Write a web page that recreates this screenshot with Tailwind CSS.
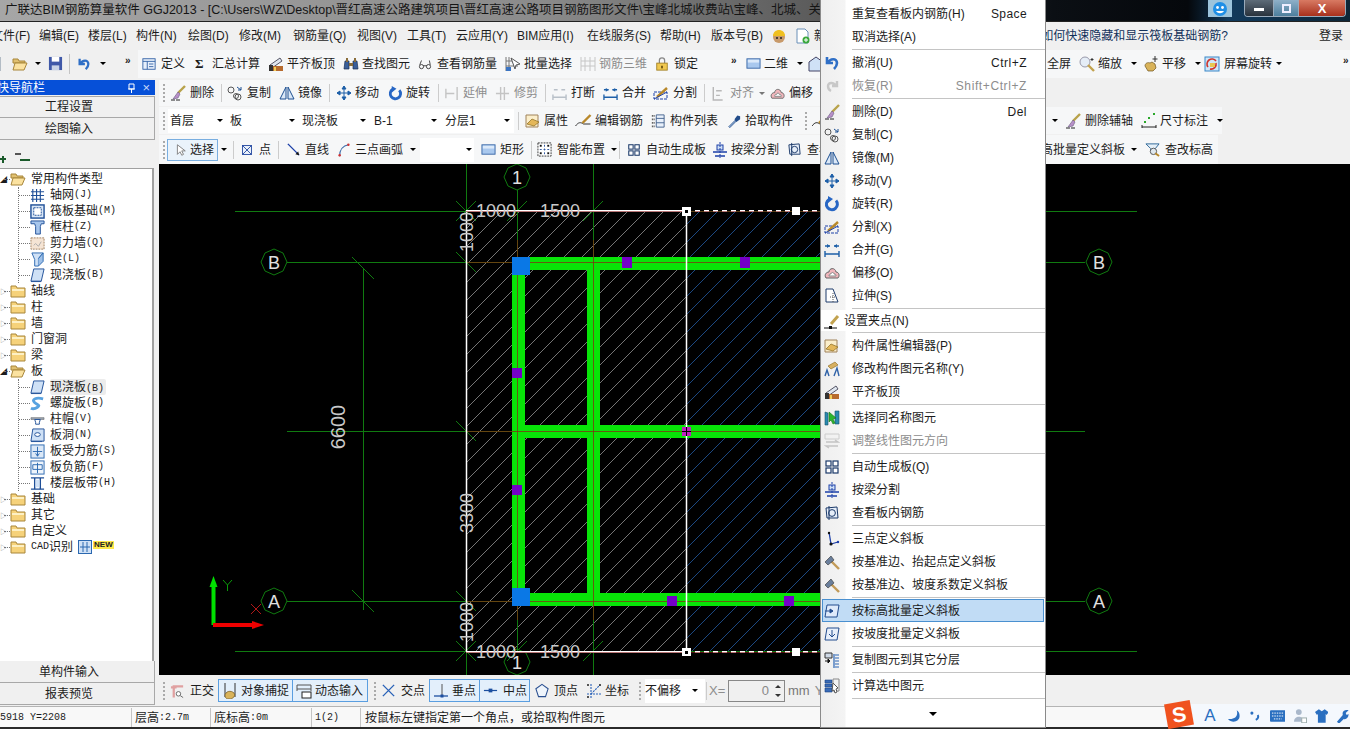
<!DOCTYPE html>
<html lang="zh-CN">
<head>
<meta charset="UTF-8">
<title>GGJ2013</title>
<script src="https://cdn.jsdelivr.net/npm/@tailwindcss/browser@4"></script>
</head>
<body class="bg-[#2a2a2a]">
<!-- shared icon sheet: the toolbars and the context menu use the same icons -->
<svg class="hidden">
  <symbol id="undo" viewBox="0 0 16 16"><path d="M3 2v6h6M4 8c2-5 9-5 9 0 0 2-1 4-3 6" fill="none" stroke="#2f6fc6" stroke-width="2.6"/></symbol>
  <symbol id="redo" viewBox="0 0 16 16"><path d="M13 3v5H8M12 8C10 4 4 4 4 8c0 2 1 4 3 5" fill="none" stroke="#c8c8c8" stroke-width="2.4"/></symbol>
  <symbol id="brush" viewBox="0 0 16 16"><path d="M1 15h9" stroke="#222" stroke-dasharray="4 1"/><path d="M15 1L8 8" stroke="#b8a24a" stroke-width="2.4"/><path d="M8 7l2 2-2 4-5 1z" fill="#b890c8" stroke="#6a5a80" stroke-width=".6"/></symbol>
  <symbol id="copy" viewBox="0 0 16 16"><g fill="none" stroke="#555"><circle cx="4" cy="5" r="3"/><circle cx="11" cy="12" r="3"/><circle cx="9" cy="11" r="2.5"/></g><path d="M10 2l4 3m0-3v3h-3" fill="none" stroke="#1d4f91"/></symbol>
  <symbol id="mirror" viewBox="0 0 16 16"><path d="M7 2v12H1zM9 2v12h6z" fill="#dbe8f7" stroke="#1d4f91"/></symbol>
  <symbol id="move" viewBox="0 0 16 16"><path d="M8 1v14M1 8h14M8 1L6 4h4zM8 15l-2-3h4zM1 8l3-2v4zM15 8l-3-2v4z" fill="#1d5fa8" stroke="#1d5fa8"/></symbol>
  <symbol id="rotate" viewBox="0 0 16 16"><path d="M12 4.5A5.5 5.5 0 1 1 5 3.5" fill="none" stroke="#2766c4" stroke-width="3"/><path d="M4 0l5 3-5 4z" fill="#2766c4"/></symbol>
  <symbol id="split" viewBox="0 0 16 16"><rect x="1" y="7" width="13" height="7" fill="none" stroke="#1c40a8" stroke-dasharray="3 1"/><path d="M4 12L14 3" stroke="#b8882a" stroke-width="2.4"/><path d="M1 14L14 7" stroke="#1c40a8"/></symbol>
  <symbol id="merge" viewBox="0 0 16 16"><path d="M1 4h5M15 4h-5M1 12h14M1 9v6M15 9v6" stroke="#1d5fa8" stroke-width="1.4"/><path d="M6 4L3 2v4zM10 4l3-2v4z" fill="#1d5fa8"/></symbol>
  <symbol id="offset" viewBox="0 0 16 16"><path d="M2 13c-2-3 0-6 3-6 0-4 6-5 7 0 3 0 4 4 2 6z" fill="#f1b6bc" stroke="#666"/><path d="M5 11c0-2 1-2 2-2 0-2 3-2 3 0 2 0 2 1 2 2z" fill="#fff" stroke="#888"/></symbol>
  <symbol id="stretch" viewBox="0 0 16 16"><path d="M2 1h7l5 13H2z" fill="#fff" stroke="#1c3a6a"/><path d="M9 5v9M6 9h6" stroke="#555" stroke-dasharray="1 1"/></symbol>
  <symbol id="pencil" viewBox="0 0 16 16"><path d="M0 15h5m3 0h5" stroke="#111"/><rect x="5" y="13" width="3" height="3" fill="#111"/><path d="M14 3L7 11" stroke="#c2a24e" stroke-width="3"/></symbol>
  <symbol id="props" viewBox="0 0 16 16"><path d="M1 2h12v12H1z" fill="#fbeecb" stroke="#a0825a"/><path d="M2 11l5-5 7 3-5 4z" fill="#e4b75a" stroke="#8a6a20" stroke-width=".7"/></symbol>
  <symbol id="rename" viewBox="0 0 16 16"><path d="M4 5l7-4 3 3-7 4z" fill="#d8b060" stroke="#8a6a20" stroke-width=".6"/><path d="M1 15l2-6 2 6M10 15l3-8 2 8" fill="none" stroke="#2f62a8" stroke-width="1.4"/></symbol>
  <symbol id="level" viewBox="0 0 16 16"><path d="M2 9L12 2l2 3L4 12z" fill="#dfe6ef" stroke="#556"/><rect x="2" y="10" width="13" height="5" fill="#b76b2e"/><rect x="6" y="11" width="2" height="4" fill="#f0cf5a"/><rect x="1" y="9" width="4" height="6" fill="#333"/></symbol>
  <symbol id="same" viewBox="0 0 16 16"><path d="M1 2l3 1v12H1zM11 1h4v13h-4z" fill="#2a8ab0" stroke="#14506a" stroke-width=".6"/><path d="M5 2l7 6-3 1 2 4-2 1-2-4-2 2z" fill="#2cb62c" stroke="#14701a" stroke-width=".6"/></symbol>
  <symbol id="adjust" viewBox="0 0 16 16"><path d="M1 1h14v5H1z" fill="none" stroke="#ccc"/><path d="M2 9h12l-3-2M14 13H2l3 2" fill="none" stroke="#c4c4c4" stroke-width="1.3"/></symbol>
  <symbol id="auto" viewBox="0 0 16 16"><g fill="#fff" stroke="#1c3a6a" stroke-width="1.2"><rect x="2" y="2" width="5" height="5"/><rect x="9" y="2" width="5" height="5"/><rect x="2" y="9" width="5" height="5"/><rect x="9" y="9" width="5" height="5"/></g></symbol>
  <symbol id="beamcut" viewBox="0 0 16 16"><path d="M1 10h14M3 14h10" stroke="#1c40a8" stroke-width="1.6"/><rect x="5" y="3" width="6" height="5" fill="#cfe0f6" stroke="#1c40a8"/><path d="M8 0v16" stroke="#1c40a8" stroke-dasharray="2 1"/></symbol>
  <symbol id="viewbar" viewBox="0 0 16 16"><path d="M2 3l11-1 1 11H3z" fill="#e6eef9" stroke="#1c3a6a"/><circle cx="8" cy="8" r="3.4" fill="none" stroke="#1c3a6a"/><path d="M5 1v14" stroke="#1c3a6a"/></symbol>
  <symbol id="tri" viewBox="0 0 16 16"><path d="M5 1l2 12 7-2" fill="none" stroke="#1c3fa8" stroke-width="1.3"/><circle cx="5" cy="2" r="1.2" fill="#111"/><circle cx="7" cy="13" r="1.6" fill="#111"/><circle cx="14" cy="11" r="1.2" fill="#1c3fa8"/></symbol>
  <symbol id="hammer" viewBox="0 0 16 16"><path d="M7 7l8 8" stroke="#c29a58" stroke-width="2.4"/><path d="M1 8l6-6 3 4-6 5z" fill="#6a7f9c" stroke="#333" stroke-width=".6"/></symbol>
  <symbol id="slabe" viewBox="0 0 16 16"><path d="M3 2h12l-2 12H1z" fill="#dfeafa" stroke="#234c8e"/><path d="M1 8h8M9 8L6 6v4z" fill="#234c8e" stroke="#234c8e"/></symbol>
  <symbol id="slabs" viewBox="0 0 16 16"><path d="M3 2h12l-2 12H1z" fill="#e8f0fb" stroke="#234c8e"/><path d="M8 4v6M5 8l3 3 3-3" fill="none" stroke="#234c8e"/></symbol>
  <symbol id="floors" viewBox="0 0 16 16"><path d="M1 1h7v5H1z" fill="#cfd9e6" stroke="#333"/><path d="M1 9h5M6 9L4 7v4z" stroke="#111" fill="#111"/><path d="M11 3h4M11 6h4M11 9h4M11 12h4M11 15h4M10 2v14" stroke="#2a64b4" stroke-width="1.2"/></symbol>
  <symbol id="calc" viewBox="0 0 16 16"><path d="M1 2h7v3H1zM1 6h7v3H1zM1 10h7v4H1z" fill="#3a6cb8" stroke="#17407f" stroke-width=".6"/><path d="M9 1h6v12H9z" fill="none" stroke="#888"/><path d="M9 5l5 5-2 1 1 3-2 1-1-3-2 1z" fill="#fff" stroke="#555"/></symbol>
  <symbol id="define" viewBox="0 0 16 16"><rect x="1" y="2" width="14" height="12" fill="#e8f0fb" stroke="#2d5ea4"/><path d="M1 5h14M6 5v9M8 8h5M8 11h5" stroke="#2d5ea4"/></symbol>
  <symbol id="binoc" viewBox="0 0 16 16"><path d="M2 5h4v8H1zM10 5h4l1 8h-5z" fill="#3a5f9a" stroke="#1b2f55" stroke-width=".7"/><path d="M3 2h2v4H3zM11 2h2v4h-2zM6 7h4v3H6z" fill="#8a6d3a"/></symbol>
  <symbol id="glasses" viewBox="0 0 16 16"><circle cx="4" cy="11" r="2.4" fill="none" stroke="#333"/><circle cx="12" cy="11" r="2.4" fill="none" stroke="#333"/><path d="M6 10h4M2 9l2-5M14 9l-1-5" stroke="#333" fill="none"/></symbol>
  <symbol id="batch" viewBox="0 0 16 16"><path d="M1 1v14M4 1v14M1 5h9M1 10h12" stroke="#777"/><path d="M6 2l9 6-4 1-1 4z" fill="#fff" stroke="#555"/><rect x="1" y="11" width="5" height="4" fill="#3a74c4"/></symbol>
  <symbol id="rebar3d" viewBox="0 0 16 16"><path d="M1 1v14M5 1v14M10 1v14M15 1v14M1 5h14M1 10h14" stroke="#c6c6c6"/></symbol>
  <symbol id="lock" viewBox="0 0 16 16"><path d="M5 7V4a3 3 0 0 1 6 0v3" fill="none" stroke="#888" stroke-width="1.4"/><rect x="2" y="7" width="12" height="8" fill="#f0c850" stroke="#a07e20"/><rect x="7" y="10" width="2" height="3" fill="#6a5010"/></symbol>
  <symbol id="box2d" viewBox="0 0 16 16"><rect x="1" y="3" width="14" height="10" fill="#a9c8ee" stroke="#3a68a8"/><rect x="2" y="4" width="12" height="3" fill="#dbe9f9"/></symbol>
  <symbol id="zoom" viewBox="0 0 16 16"><circle cx="6" cy="6" r="5" fill="#e5edf7" stroke="#99a"/><path d="M9 9l6 6" stroke="#c2a24e" stroke-width="2.4"/><path d="M13 2v3M11.500 3.500h3" stroke="#333"/></symbol>
  <symbol id="hand" viewBox="0 0 16 16"><path d="M2 10c0-3 3-4 5-3l2-1 3 2 1 4-3 3H5z" fill="#d9b35a" stroke="#6e5520" stroke-width=".7"/><path d="M12 0v6M9.500 3h5" stroke="#333"/></symbol>
  <symbol id="rotscreen" viewBox="0 0 16 16"><rect x="1" y="1" width="14" height="14" fill="#cfe6f8" stroke="#3a88c8"/><path d="M4 11a5 5 0 0 1 8-6" fill="none" stroke="#d0342c" stroke-width="1.6"/><path d="M12 7a5 5 0 0 1-6 6" fill="none" stroke="#d0342c" stroke-width="1.6"/><rect x="6" y="7" width="5" height="4" fill="#e8c850"/></symbol>
  <symbol id="arrow" viewBox="0 0 16 16"><path d="M5 2v11l3-3 2 4 2-1-2-4h4z" fill="#fff" stroke="#777"/></symbol>
  <symbol id="point" viewBox="0 0 16 16"><rect x="2" y="2" width="12" height="12" fill="#e9f0fa" stroke="#2448a0" stroke-width="1.2"/><path d="M2 2l12 12M14 2L2 14" stroke="#2448a0" stroke-width="1.2"/></symbol>
  <symbol id="line" viewBox="0 0 16 16"><path d="M2 2l12 12" stroke="#1c3fa8" stroke-width="1.5"/><path d="M14 14l-4-1 3-3z" fill="#111"/></symbol>
  <symbol id="arc" viewBox="0 0 16 16"><path d="M3 15C3 8 7 3 13 2" fill="none" stroke="#3a6aa8" stroke-width="1.4"/><circle cx="3" cy="14" r="1.4" fill="#d03030"/><circle cx="13" cy="2" r="1.4" fill="#d03030"/></symbol>
  <symbol id="smart" viewBox="0 0 16 16"><rect x="1" y="1" width="14" height="14" fill="#fff" stroke="#333" stroke-dasharray="2 1"/><path d="M8 3v10M3 8h10" stroke="#2a54a0" stroke-dasharray="2 2"/><rect x="3" y="3" width="2" height="2" fill="#111"/><rect x="11" y="11" width="2" height="2" fill="#111"/><rect x="11" y="3" width="2" height="2" fill="#111"/><rect x="3" y="11" width="2" height="2" fill="#111"/></symbol>
  <symbol id="editbar" viewBox="0 0 16 16"><path d="M0 13c3-4 5-4 8-2h7" fill="none" stroke="#333"/><path d="M15 2L7 10" stroke="#b8882a" stroke-width="2.4"/></symbol>
  <symbol id="list" viewBox="0 0 16 16"><path d="M6 1h9v14H6zM6 5h9M6 10h9" fill="#e8f0fb" stroke="#3a5a88"/><path d="M1 2h3M1 6h3M1 10h3M1 14h3" stroke="#333" stroke-dasharray="1 1" stroke-width="2"/></symbol>
  <symbol id="pick" viewBox="0 0 16 16"><path d="M2 14l7-7 1 1-7 7z" fill="#bcd6f2" stroke="#224c8a"/><path d="M8 6l3-4 3 1 0 3-4 3z" fill="#224c8a"/></symbol>
  <symbol id="dim" viewBox="0 0 16 16"><path d="M1 12v3M15 12v3M1 14h14" stroke="#222"/><path d="M3 9h2M7 5h2M12 1h2" stroke="#2aa82a" stroke-width="2"/></symbol>
  <symbol id="elev" viewBox="0 0 16 16"><path d="M1 2h14l-4 5v2H6V7z" fill="#e6f0f8" stroke="#2a6496"/><circle cx="9" cy="10" r="3.400" fill="#dfe8f0" stroke="#555"/><path d="M11 12l4 3" stroke="#b8882a" stroke-width="2"/></symbol>
  <symbol id="ortho" viewBox="0 0 16 16"><path d="M4 15V3h10M1 4h6" fill="none" stroke="#e0a0a0" stroke-width="2.400"/><circle cx="9" cy="11" r="2.400" fill="#fff" stroke="#666"/><path d="M11 13l3 2" stroke="#666"/></symbol>
  <symbol id="snap" viewBox="0 0 16 16"><path d="M3 0v14M13 0v14" stroke="#333"/><path d="M3 13c0-5 6-6 9-3 2 3-1 6-5 6-2 0-4-1-4-3z" fill="#d9b35a" stroke="#6e5520" stroke-width=".7"/></symbol>
  <symbol id="dyn" viewBox="0 0 16 16"><path d="M1 2h14M1 6h14" stroke="#555"/><path d="M1 2v6M15 2v6" stroke="#555"/><rect x="6" y="9" width="9" height="6" fill="#fff" stroke="#222"/></symbol>
  <symbol id="cross" viewBox="0 0 16 16"><path d="M2 2l12 12M14 2L2 14" stroke="#2a62b8" stroke-width="1.500"/></symbol>
  <symbol id="perp" viewBox="0 0 16 16"><path d="M1 13h14" stroke="#1c4fa0" stroke-width="1.300"/><path d="M9 1v12" stroke="#555"/><rect x="7.500" y="11.500" width="3" height="3" fill="#1c4fa0"/></symbol>
  <symbol id="mid" viewBox="0 0 16 16"><path d="M1 8h14" stroke="#1c4fa0" stroke-width="1.300"/><rect x="6" y="6" width="4" height="4" fill="#1c4fa0"/></symbol>
  <symbol id="vertex" viewBox="0 0 16 16"><path d="M8 1l7 5-3 9H4L1 6z" fill="#eef4fb" stroke="#2a4f90" stroke-width="1.200"/></symbol>
  <symbol id="coord" viewBox="0 0 16 16"><path d="M5 1v14M1 11h14M5 11l9-9" stroke="#2a62b8" stroke-dasharray="2 1" stroke-width="1.100"/><circle cx="2" cy="2" r="1" fill="#222"/><circle cx="14" cy="2" r="1" fill="#222"/><circle cx="2" cy="14" r="1" fill="#222"/></symbol>
  <symbol id="folder" viewBox="0 0 16 16"><path d="M1 3h5l1 2h8v9H1z" fill="#f6d27a" stroke="#a8863a"/><path d="M2 6h12v2H2z" fill="#fdf0c4"/></symbol>
  <symbol id="folderopen" viewBox="0 0 16 16"><path d="M1 3h5l1 2h6v2H1z" fill="#e0c070" stroke="#a8863a"/><path d="M1 14l2-7h12l-3 7z" fill="#fbe2a0" stroke="#a8863a"/></symbol>
  <symbol id="tgrid" viewBox="0 0 16 16"><path d="M3 1v14M7 1v14M11 1v14M1 4h14M1 8h14M1 12h14" stroke="#1f4f98" stroke-width="1.200"/></symbol>
  <symbol id="traft" viewBox="0 0 16 16"><rect x="1" y="1" width="14" height="14" fill="#dbe8f7" stroke="#1f4f98" stroke-width="1.500"/><rect x="4" y="4" width="8" height="8" fill="#fff" stroke="#1f4f98" stroke-dasharray="2 1"/></symbol>
  <symbol id="tcol" viewBox="0 0 16 16"><path d="M1 1h14v3h-3l-1 3v8H6V7L5 4H1z" fill="#a7c6ec" stroke="#1f4f98"/></symbol>
  <symbol id="twall" viewBox="0 0 16 16"><rect x="1" y="2" width="14" height="12" fill="#f5e4d4" stroke="#a08060" stroke-dasharray="2 1"/><path d="M4 10l2-2 3 3 3-5" stroke="#aaa" fill="none"/></symbol>
  <symbol id="tbeam" viewBox="0 0 16 16"><path d="M2 1h12L9 7v8H5V8z" fill="#cfe1f6" stroke="#2a68b0"/><path d="M9 7l5-6v9l-5 5" fill="#9ec0e8" stroke="#2a68b0"/></symbol>
  <symbol id="tslab" viewBox="0 0 16 16"><path d="M4 1h11l-3 13H1z" fill="#cfe1f6" stroke="#1f4f98"/><path d="M1 14h11v1H1z" fill="#1f4f98"/></symbol>
  <symbol id="tspiral" viewBox="0 0 16 16"><path d="M14 3C6 1 1 4 5 7s6 3 3 5-5 2-7 1" fill="none" stroke="#58a2e0" stroke-width="3"/></symbol>
  <symbol id="tcap" viewBox="0 0 16 16"><path d="M1 6h14v2H1z" fill="#9aa4b2" stroke="#555" stroke-width=".5"/><path d="M5 8h6l-1 3v2H6v-2z" fill="#fff" stroke="#1f4f98"/></symbol>
  <symbol id="thole" viewBox="0 0 16 16"><path d="M3 1h12v13H1z" fill="#cfe1f6" stroke="#1f4f98"/><ellipse cx="8" cy="7" rx="3" ry="2" fill="#fff" stroke="#1f4f98"/><path d="M1 14h12v1H1z" fill="#1f4f98"/></symbol>
  <symbol id="tforce" viewBox="0 0 16 16"><rect x="1" y="1" width="14" height="14" fill="#dbe8f7" stroke="#2a68b0"/><path d="M8 3v10M3 8h10M6 10l2 3 2-3" fill="none" stroke="#2a68b0"/></symbol>
  <symbol id="tneg" viewBox="0 0 16 16"><rect x="1" y="1" width="14" height="14" fill="#eef4fb" stroke="#2a68b0"/><path d="M3 5h10v5H3zM8 3v11" fill="none" stroke="#2a68b0"/></symbol>
  <symbol id="tstrip" viewBox="0 0 16 16"><path d="M1 2h14M1 14h14" stroke="#1f4f98" stroke-width="1.500"/><path d="M5 2v12M11 2v12" stroke="#1f4f98" stroke-width="1.500"/><rect x="6" y="4" width="4" height="8" fill="#cfe1f6"/></symbol>
</svg>

<div class="relative w-[1350px] h-[729px] overflow-hidden font-['Liberation_Sans','Noto_Sans_CJK_SC',sans-serif] text-[12px] leading-none text-[#1c1c1c]">

  <!-- title bar -->
  <div class="flex items-center h-[22px] pl-[5px] border-b border-[#222] bg-[linear-gradient(90deg,#a6a6a6_0,#8b8b8b_40%,#5c5c5c_60%,#0b0f14_78%,#05080c_88%,#123a5c_91%,#0d2536_100%)] whitespace-nowrap overflow-hidden relative">
    <span class="text-[#151515] text-[12.5px]">广联达BIM钢筋算量软件 GGJ2013 - [C:\Users\WZ\Desktop\晋红高速公路建筑项目\晋红高速公路项目钢筋图形文件\宝峰北城收费站\宝峰、北城、关</span>
    <div class="absolute right-0 top-0 h-[18px] flex items-start">
      <div class="w-[24px] h-[17px] bg-[#9cc4dc] flex items-center justify-center mr-[12px]">
        <svg class="w-4 h-4" viewBox="0 0 16 16"><circle cx="8" cy="8" r="7" fill="#1f8fe6"/><circle cx="5.500" cy="6.500" r="1.400" fill="#fff"/><circle cx="10.500" cy="6.500" r="1.400" fill="#fff"/><path d="M4 10c2 3 6 3 8 0z" fill="#fff"/></svg>
      </div>
      <div class="flex h-[17px] w-[102px] mr-[4px] rounded-b-[4px] overflow-hidden border border-[#9ab] border-t-0">
        <div class="w-[28px] bg-[linear-gradient(#5d6b78,#29323c)] flex items-center justify-center"><span class="w-[10px] h-[3px] bg-white mt-[3px]"></span></div>
        <div class="w-[26px] bg-[linear-gradient(#8fb0c8,#4d7f9d)] flex items-center justify-center border-x border-[#9ab]"><span class="w-[9px] h-[9px] border-2 border-[#eef] "></span></div>
        <div class="flex-1 bg-[linear-gradient(#d87a63,#a8301c)] flex items-center justify-center text-white font-bold text-[13px]">X</div>
      </div>
    </div>
  </div>

  <!-- menu bar -->
  <div class="flex items-center h-[27px] bg-[#f0f0f0] whitespace-nowrap relative">
    <span class="w-[39px] shrink-0 -ml-[9px] mr-[9px]">文件(F)</span><span class="w-[49px] shrink-0">编辑(E)</span><span class="w-[48px] shrink-0">楼层(L)</span><span class="w-[52px] shrink-0">构件(N)</span><span class="w-[51px] shrink-0">绘图(D)</span><span class="w-[54px] shrink-0">修改(M)</span><span class="w-[64px] shrink-0">钢筋量(Q)</span><span class="w-[50px] shrink-0">视图(V)</span><span class="w-[49px] shrink-0">工具(T)</span><span class="w-[61px] shrink-0">云应用(Y)</span><span class="w-[70px] shrink-0">BIM应用(I)</span><span class="w-[73px] shrink-0">在线服务(S)</span><span class="w-[51px] shrink-0">帮助(H)</span><span class="w-[60px] shrink-0">版本号(B)</span>
    <svg class="w-4 h-4 shrink-0 mr-[8px]" viewBox="0 0 16 16"><circle cx="8" cy="9" r="6" fill="#c89a6a"/><path d="M2 8c0-8 12-8 12 0z" fill="#f0c020"/><circle cx="6" cy="10" r="1" fill="#222"/><circle cx="10" cy="10" r="1" fill="#222"/></svg>
    <svg class="w-4 h-4 shrink-0 mr-[3px]" viewBox="0 0 16 16"><path d="M2 1h8l3 3v11H2z" fill="#fff" stroke="#6a90b8"/><circle cx="11" cy="12" r="3.500" fill="#3aa83a"/><path d="M11 10v4M9 12h4" stroke="#fff"/></svg>
    <span class="w-[222px] shrink-0">新</span>
    <span class="text-[#12305a] w-[192px] shrink-0 text-right">如何快速隐藏和显示筏板基础钢筋?</span>
    <span class="ml-[91px] shrink-0">登录</span>
  </div>

  <!-- standard toolbar -->
  <div class="flex items-center h-[29px] bg-[#f0f0f0] whitespace-nowrap">
    <svg class="w-4 h-4 shrink-0 -ml-[14px] mr-[10px]" viewBox="0 0 16 16"><path d="M2 1h12v14H2z" fill="#fff" stroke="#789"/></svg>
    <svg class="w-4 h-4 shrink-0" viewBox="0 0 16 16"><use href="#folderopen"/></svg>
    <i class="ml-[7px] mr-[7px] shrink-0 w-0 h-0 border-x-[3px] border-x-transparent border-t-[3px] border-t-black"></i>
    <svg class="w-[15px] h-[15px] shrink-0" viewBox="0 0 16 16"><path d="M1 1h14v14H1z" fill="#3f58a8"/><rect x="4" y="1" width="8" height="5" fill="#fff"/><rect x="4" y="10" width="8" height="5" fill="#c9d3e6"/></svg>
    <span class="w-px h-[20px] bg-[#c4c4c4] shrink-0 ml-[6px] mr-[7px]"></span>
    <svg class="w-[14px] h-[14px] shrink-0"><use href="#undo"/></svg>
    <i class="ml-[9px] shrink-0 w-0 h-0 border-x-[3px] border-x-transparent border-t-[3px] border-t-black"></i>
    <span class="ml-[19px] w-[14px] text-[10px] font-bold -mt-[5px] shrink-0">»</span>

    <div class="flex items-center h-[28px] pl-[4px] bg-[#f6f7f8] w-[1212px] shrink-0 -ml-[1px]">
      <span class="flex items-center gap-[5px] w-[53px] shrink-0"><svg class="w-[14px] h-[14px]"><use href="#define"/></svg>定义</span>
      <span class="flex items-center gap-[7px] w-[73px] shrink-0"><b class="w-[10px] text-[13px] font-['Liberation_Serif',serif]">Σ</b>汇总计算</span>
      <span class="flex items-center gap-[3px] w-[75px] shrink-0"><svg class="w-4 h-4"><use href="#level"/></svg>平齐板顶</span>
      <span class="flex items-center gap-[3px] w-[75px] shrink-0"><svg class="w-4 h-4"><use href="#binoc"/></svg>查找图元</span>
      <span class="flex items-center gap-[5px] w-[87px] shrink-0"><svg class="w-[14px] h-[14px]"><use href="#glasses"/></svg>查看钢筋量</span>
      <span class="flex items-center gap-[3px] w-[75px] shrink-0"><svg class="w-4 h-4"><use href="#batch"/></svg>批量选择</span>
      <span class="flex items-center gap-[3px] w-[75px] shrink-0 text-[#8d8d8d]"><svg class="w-4 h-4"><use href="#rebar3d"/></svg>钢筋三维</span>
      <span class="flex items-center gap-[5px] w-[76px] shrink-0"><svg class="w-[14px] h-[14px]"><use href="#lock"/></svg>锁定</span>
      <span class="w-[15px] text-[10px] font-bold -mt-[5px] shrink-0">»</span>
      <span class="flex items-center gap-[3px] w-[62px] shrink-0"><svg class="w-[15px] h-[15px]"><use href="#box2d"/></svg>二维<i class="ml-[6px] w-0 h-0 border-x-[3px] border-x-transparent border-t-[3px] border-t-black"></i></span>
      <svg class="w-4 h-4 shrink-0" viewBox="0 0 16 16"><path d="M1 6l7-5 7 5v9H1z" fill="#cfe1f6" stroke="#446"/></svg>
      <span class="w-[223px] shrink-0"></span>
      <span class="w-[32px] shrink-0">全屏</span>
      <span class="flex items-center gap-[3px] w-[64px] shrink-0"><svg class="w-4 h-4"><use href="#zoom"/></svg>缩放<i class="ml-[6px] w-0 h-0 border-x-[3px] border-x-transparent border-t-[3px] border-t-black"></i></span>
      <span class="flex items-center gap-[3px] w-[61px] shrink-0"><svg class="w-4 h-4"><use href="#hand"/></svg>平移<i class="ml-[6px] w-0 h-0 border-x-[3px] border-x-transparent border-t-[3px] border-t-black"></i></span>
      <span class="flex items-center gap-[4px] w-[137px] shrink-0"><svg class="w-4 h-4 shrink-0"><use href="#rotscreen"/></svg>屏幕旋转<i class="w-0 h-0 shrink-0 border-x-[3px] border-x-transparent border-t-[3px] border-t-black"></i><b class="ml-[57px] text-[10px] -mt-[5px] shrink-0">»</b></span>
    </div>
  </div>

  <!-- main area -->
  <div class="flex h-[628px]">
    <!-- left navigation -->
    <aside class="w-[159px] shrink-0 bg-[#f0f0f0] pt-[2px] pb-[1px] flex flex-col">
      <div class="w-[155px] h-[15px] bg-[#0650d8] text-white flex items-center justify-between pr-[5px] shrink-0 -indent-[3px]">
        <span class="text-[12px]">快导航栏</span>
        <span class="flex items-center gap-[9px]"><svg class="w-[9px] h-[10px]" viewBox="0 0 9 10"><path d="M2 1h5v5H2zM1 6h7M4.500 6v4" fill="none" stroke="#fff"/></svg><span class="text-[13px] text-[#c8d8f8]">×</span></span>
      </div>
      <div class="w-[155px] h-[22px] mt-[1px] shrink-0 flex items-center justify-center border border-[#a8a8a8] border-l-0 bg-[#f0f0f0] pr-[16px]">工程设置</div>
      <div class="w-[155px] h-[22px] shrink-0 flex items-center justify-center border-b border-r border-[#a8a8a8] bg-[#f0f0f0] pr-[16px]">绘图输入</div>
      <div class="h-[28px] shrink-0 flex items-end pb-[4px]">
        <svg class="w-[32px] h-[12px]" viewBox="0 0 32 12"><path d="M-1 7h7M3 4v7" stroke="#1a5a2a" stroke-width="2"/><path d="M15 2h6" stroke="#222" stroke-width="1.500"/><path d="M20 8h10" stroke="#1a5a2a" stroke-width="2"/></svg>
      </div>
      <div class="w-[154px] flex-1 bg-white border-t border-r-2 border-[#a0a0a0] pt-[2px] overflow-hidden">
        <div class="flex items-center h-4"><span class="text-[7px] w-[4px]">◢</span><span class="w-[6px] border-t border-dotted border-[#777]"></span><svg class="w-4 h-4 mr-[5px]"><use href="#folderopen"/></svg>常用构件类型</div>
        <div class="ml-[18px] border-l border-dotted border-[#777]">
          <div class="flex items-center h-4"><span class="w-[11px] border-t border-dotted border-[#777]"></span><svg class="w-[15px] h-[15px] mr-[5px]"><use href="#tgrid"/></svg>轴网<span class="font-['Liberation_Mono'] text-[10px]">(J)</span></div>
          <div class="flex items-center h-4"><span class="w-[11px] border-t border-dotted border-[#777]"></span><svg class="w-[15px] h-[15px] mr-[5px]"><use href="#traft"/></svg>筏板基础<span class="font-['Liberation_Mono'] text-[10px]">(M)</span></div>
          <div class="flex items-center h-4"><span class="w-[11px] border-t border-dotted border-[#777]"></span><svg class="w-[15px] h-[15px] mr-[5px]"><use href="#tcol"/></svg>框柱<span class="font-['Liberation_Mono'] text-[10px]">(Z)</span></div>
          <div class="flex items-center h-4"><span class="w-[11px] border-t border-dotted border-[#777]"></span><svg class="w-[15px] h-[15px] mr-[5px]"><use href="#twall"/></svg>剪力墙<span class="font-['Liberation_Mono'] text-[10px]">(Q)</span></div>
          <div class="flex items-center h-4"><span class="w-[11px] border-t border-dotted border-[#777]"></span><svg class="w-[15px] h-[15px] mr-[5px]"><use href="#tbeam"/></svg>梁<span class="font-['Liberation_Mono'] text-[10px]">(L)</span></div>
          <div class="flex items-center h-4"><span class="w-[11px] border-t border-dotted border-[#777]"></span><svg class="w-[15px] h-[15px] mr-[5px]"><use href="#tslab"/></svg>现浇板<span class="font-['Liberation_Mono'] text-[10px]">(B)</span></div>
        </div>
        <div class="flex items-center h-4"><span class="text-[7px] w-[4px] text-[#999]">▷</span><span class="w-[6px] border-t border-dotted border-[#777]"></span><svg class="w-4 h-4 mr-[5px]"><use href="#folder"/></svg>轴线</div>
        <div class="flex items-center h-4"><span class="text-[7px] w-[4px] text-[#999]">▷</span><span class="w-[6px] border-t border-dotted border-[#777]"></span><svg class="w-4 h-4 mr-[5px]"><use href="#folder"/></svg>柱</div>
        <div class="flex items-center h-4"><span class="text-[7px] w-[4px] text-[#999]">▷</span><span class="w-[6px] border-t border-dotted border-[#777]"></span><svg class="w-4 h-4 mr-[5px]"><use href="#folder"/></svg>墙</div>
        <div class="flex items-center h-4"><span class="text-[7px] w-[4px] text-[#999]">▷</span><span class="w-[6px] border-t border-dotted border-[#777]"></span><svg class="w-4 h-4 mr-[5px]"><use href="#folder"/></svg>门窗洞</div>
        <div class="flex items-center h-4"><span class="text-[7px] w-[4px] text-[#999]">▷</span><span class="w-[6px] border-t border-dotted border-[#777]"></span><svg class="w-4 h-4 mr-[5px]"><use href="#folder"/></svg>梁</div>
        <div class="flex items-center h-4"><span class="text-[7px] w-[4px]">◢</span><span class="w-[6px] border-t border-dotted border-[#777]"></span><svg class="w-4 h-4 mr-[5px]"><use href="#folderopen"/></svg>板</div>
        <div class="ml-[18px] border-l border-dotted border-[#777]">
          <div class="flex items-center h-4"><span class="w-[11px] border-t border-dotted border-[#777]"></span><svg class="w-[15px] h-[15px] mr-[5px]"><use href="#tslab"/></svg><span class="bg-[#ececec] rounded-[2px] h-4 leading-4 pr-[2px]">现浇板<span class="font-['Liberation_Mono'] text-[10px]">(B)</span></span></div>
          <div class="flex items-center h-4"><span class="w-[11px] border-t border-dotted border-[#777]"></span><svg class="w-[15px] h-[15px] mr-[5px]"><use href="#tspiral"/></svg>螺旋板<span class="font-['Liberation_Mono'] text-[10px]">(B)</span></div>
          <div class="flex items-center h-4"><span class="w-[11px] border-t border-dotted border-[#777]"></span><svg class="w-[15px] h-[15px] mr-[5px]"><use href="#tcap"/></svg>柱帽<span class="font-['Liberation_Mono'] text-[10px]">(V)</span></div>
          <div class="flex items-center h-4"><span class="w-[11px] border-t border-dotted border-[#777]"></span><svg class="w-[15px] h-[15px] mr-[5px]"><use href="#thole"/></svg>板洞<span class="font-['Liberation_Mono'] text-[10px]">(N)</span></div>
          <div class="flex items-center h-4"><span class="w-[11px] border-t border-dotted border-[#777]"></span><svg class="w-[15px] h-[15px] mr-[5px]"><use href="#tforce"/></svg>板受力筋<span class="font-['Liberation_Mono'] text-[10px]">(S)</span></div>
          <div class="flex items-center h-4"><span class="w-[11px] border-t border-dotted border-[#777]"></span><svg class="w-[15px] h-[15px] mr-[5px]"><use href="#tneg"/></svg>板负筋<span class="font-['Liberation_Mono'] text-[10px]">(F)</span></div>
          <div class="flex items-center h-4"><span class="w-[11px] border-t border-dotted border-[#777]"></span><svg class="w-[15px] h-[15px] mr-[5px]"><use href="#tstrip"/></svg>楼层板带<span class="font-['Liberation_Mono'] text-[10px]">(H)</span></div>
        </div>
        <div class="flex items-center h-4"><span class="text-[7px] w-[4px] text-[#999]">▷</span><span class="w-[6px] border-t border-dotted border-[#777]"></span><svg class="w-4 h-4 mr-[5px]"><use href="#folder"/></svg>基础</div>
        <div class="flex items-center h-4"><span class="text-[7px] w-[4px] text-[#999]">▷</span><span class="w-[6px] border-t border-dotted border-[#777]"></span><svg class="w-4 h-4 mr-[5px]"><use href="#folder"/></svg>其它</div>
        <div class="flex items-center h-4"><span class="text-[7px] w-[4px] text-[#999]">▷</span><span class="w-[6px] border-t border-dotted border-[#777]"></span><svg class="w-4 h-4 mr-[5px]"><use href="#folder"/></svg>自定义</div>
        <div class="flex items-center h-4"><span class="text-[7px] w-[4px] text-[#999]">▷</span><span class="w-[6px] border-t border-dotted border-[#777]"></span><svg class="w-4 h-4 mr-[5px]"><use href="#folder"/></svg><span class="font-['Liberation_Mono'] text-[10px]">CAD</span>识别
          <svg class="w-[14px] h-[14px] ml-[5px]" viewBox="0 0 14 14"><rect x=".5" y=".5" width="13" height="13" fill="#cfe1f6" stroke="#2a68b0"/><path d="M5 2v10M9 2v10M2 7h10" stroke="#2a68b0"/></svg>
          <span class="ml-[1px] -mt-[5px] bg-[#ffe84a] text-[#222] text-[8px] font-bold px-[1px]">NEW</span></div>
      </div>
      <div class="w-[155px] h-[22px] shrink-0 flex items-center justify-center border-b border-r border-[#a8a8a8] pr-[16px]">单构件输入</div>
      <div class="w-[155px] h-[22px] shrink-0 flex items-center justify-center border-b border-r border-[#a8a8a8] pr-[16px]">报表预览</div>
    </aside>

    <!-- right column -->
    <div class="flex-1 flex flex-col bg-[#f0f0f0] pt-[2px] whitespace-nowrap min-w-0">
      <!-- edit toolbar -->
      <div class="flex items-center h-[26px] bg-[#f6f7f8] mb-[1px] w-[690px] shrink-0">
        <span class="w-[2px] h-[18px] ml-[4px] mr-[5px] border-l-2 border-dotted border-[#aaa] shrink-0"></span>
        <span class="flex items-center gap-[4px] w-[51px] shrink-0 ml-[0px]"><svg class="w-4 h-4"><use href="#brush"/></svg>删除</span>
        <span class="w-px h-[18px] bg-[#ccc] mr-[5px] shrink-0"></span>
        <span class="flex items-center gap-[4px] w-[52px] shrink-0"><svg class="w-4 h-4"><use href="#copy"/></svg>复制</span>
        <span class="flex items-center gap-[3px] w-[50px] shrink-0"><svg class="w-4 h-4"><use href="#mirror"/></svg>镜像</span>
        <span class="w-px h-[18px] bg-[#ccc] mr-[6px] shrink-0"></span>
        <span class="flex items-center gap-[3px] w-[52px] shrink-0"><svg class="w-4 h-4"><use href="#move"/></svg>移动</span>
        <span class="flex items-center gap-[3px] w-[50px] shrink-0"><svg class="w-[15px] h-[15px]"><use href="#rotate"/></svg>旋转</span>
        <span class="w-px h-[18px] bg-[#ccc] mr-[5px] shrink-0"></span>
        <span class="flex items-center gap-[4px] w-[51px] shrink-0 text-[#8d8d8d]"><svg class="w-[15px] h-[15px]" viewBox="0 0 16 16"><path d="M14 1v14M2 8h9M2 3v10" stroke="#c4c4c4" stroke-width="1.500"/></svg>延伸</span>
        <span class="flex items-center gap-[4px] w-[50px] shrink-0 text-[#8d8d8d]"><svg class="w-[15px] h-[15px]" viewBox="0 0 16 16"><path d="M6 1v14M10 1v14M1 8h14" stroke="#c4c4c4" stroke-width="1.500"/></svg>修剪</span>
        <span class="w-px h-[18px] bg-[#ccc] mr-[6px] shrink-0"></span>
        <span class="flex items-center gap-[4px] w-[51px] shrink-0"><svg class="w-[15px] h-[15px]" viewBox="0 0 16 16"><path d="M2 4h4M10 4h4M1 12h14M1 9v6M15 9v6" stroke="#b8c0c8" stroke-width="1.500"/></svg>打断</span>
        <span class="flex items-center gap-[4px] w-[50px] shrink-0"><svg class="w-[15px] h-[15px]"><use href="#merge"/></svg>合并</span>
        <span class="flex items-center gap-[4px] w-[51px] shrink-0"><svg class="w-4 h-4"><use href="#split"/></svg>分割</span>
        <span class="w-px h-[18px] bg-[#ccc] mr-[6px] shrink-0"></span>
        <span class="flex items-center gap-[6px] w-[59px] shrink-0 text-[#8d8d8d]"><svg class="w-[13px] h-[15px]" viewBox="0 0 13 16"><path d="M2 1v14h10M5 5h6M5 10h4" stroke="#b8b8b8" stroke-width="1.500" fill="none"/></svg>对齐<i class="-ml-[1px] w-0 h-0 border-x-[3px] border-x-transparent border-t-[3px] border-t-[#777]"></i></span>
        <span class="flex items-center gap-[4px] w-[50px] shrink-0"><svg class="w-[15px] h-[15px]"><use href="#offset"/></svg>偏移</span>
      </div>

      <!-- component toolbar -->
      <div class="flex items-center h-[27px] bg-[#f6f7f8] mb-[1px] w-[1063px] shrink-0">
        <span class="w-[2px] h-[18px] ml-[4px] mr-[3px] border-l-2 border-dotted border-[#aaa] shrink-0"></span>
        <span class="flex items-center justify-between w-[60px] h-[24px] pl-[2px] pr-[5px] bg-white shrink-0">首层<i class="w-0 h-0 border-x-[3px] border-x-transparent border-t-[3px] border-t-black"></i></span>
        <span class="flex items-center justify-between w-[71px] h-[24px] pl-[2px] pr-[4px] bg-white shrink-0">板<i class="w-0 h-0 border-x-[3px] border-x-transparent border-t-[3px] border-t-black"></i></span>
        <span class="flex items-center justify-between w-[72px] h-[24px] pl-[3px] pr-[5px] bg-white shrink-0">现浇板<i class="w-0 h-0 border-x-[3px] border-x-transparent border-t-[3px] border-t-black"></i></span>
        <span class="flex items-center justify-between w-[72px] h-[24px] pl-[3px] pr-[6px] bg-white shrink-0">B-1<i class="w-0 h-0 border-x-[3px] border-x-transparent border-t-[3px] border-t-black"></i></span>
        <span class="flex items-center justify-between w-[71px] h-[24px] pl-[2px] pr-[4px] bg-white shrink-0">分层1<i class="w-0 h-0 border-x-[3px] border-x-transparent border-t-[3px] border-t-black"></i></span>
        <span class="w-px h-[18px] bg-[#ccc] ml-[4px] mr-[6px] shrink-0"></span>
        <span class="flex items-center gap-[3px] w-[50px] shrink-0"><svg class="w-4 h-4"><use href="#props"/></svg>属性</span>
        <span class="flex items-center gap-[3px] w-[76px] shrink-0"><svg class="w-[17px] h-4"><use href="#editbar"/></svg>编辑钢筋</span>
        <span class="flex items-center gap-[5px] w-[76px] shrink-0"><svg class="w-[14px] h-4"><use href="#list"/></svg>构件列表</span>
        <span class="flex items-center gap-[3px] w-[78px] shrink-0"><svg class="w-[15px] h-4"><use href="#pick"/></svg>拾取构件</span>
        <span class="w-[2px] h-[18px] mr-[5px] border-l-2 border-dotted border-[#aaa] shrink-0"></span>
        <svg class="w-4 h-4 shrink-0"><use href="#editbar"/></svg>
        <span class="w-[224px] shrink-0"></span>
        <i class="shrink-0 w-0 h-0 border-x-[3px] border-x-transparent border-t-[3px] border-t-black mr-[7px]"></i>
        <span class="flex items-center gap-[4px] w-[76px] shrink-0"><svg class="w-4 h-4"><use href="#brush"/></svg>删除辅轴</span>
        <span class="flex items-center gap-[3px] shrink-0"><svg class="w-4 h-4"><use href="#dim"/></svg>尺寸标注<i class="ml-[6px] w-0 h-0 border-x-[3px] border-x-transparent border-t-[3px] border-t-black"></i></span>
      </div>

      <!-- draw toolbar -->
      <div class="flex items-center h-[29px] bg-[#f6f7f8] w-[1059px] shrink-0">
        <span class="w-[2px] h-[18px] ml-[4px] mr-[2px] border-l-2 border-dotted border-[#aaa] shrink-0"></span>
        <span class="flex items-center gap-[3px] w-[51px] h-[22px] pl-[5px] border border-[#79aee0] bg-[#eaf3fb] shrink-0"><svg class="w-[14px] h-[14px]"><use href="#arrow"/></svg>选择</span>
        <i class="ml-[3px] mr-[6px] shrink-0 w-0 h-0 border-x-[3px] border-x-transparent border-t-[3px] border-t-black"></i>
        <span class="w-px h-[18px] bg-[#ccc] mr-[7px] shrink-0"></span>
        <span class="flex items-center gap-[6px] w-[37px] shrink-0"><svg class="w-3 h-3"><use href="#point"/></svg>点</span>
        <span class="w-px h-[18px] bg-[#ccc] mr-[7px] shrink-0"></span>
        <span class="flex items-center gap-[4px] w-[51px] shrink-0"><svg class="w-[15px] h-[15px]"><use href="#line"/></svg>直线</span>
        <span class="flex items-center gap-[4px] w-[83px] shrink-0"><svg class="w-[14px] h-[14px]"><use href="#arc"/></svg>三点画弧<i class="ml-[3px] w-0 h-0 border-x-[3px] border-x-transparent border-t-[3px] border-t-black"></i></span>
        <span class="flex items-center justify-end w-[54px] h-[24px] pr-[2px] bg-white shrink-0"><i class="w-0 h-0 border-x-[3px] border-x-transparent border-t-[3px] border-t-black"></i></span>
        <span class="w-[7px] shrink-0"></span>
        <span class="flex items-center gap-[4px] w-[50px] shrink-0"><svg class="w-[15px] h-[15px]"><use href="#box2d"/></svg>矩形</span>
        <span class="w-px h-[18px] bg-[#ccc] mr-[5px] shrink-0"></span>
        <span class="flex items-center gap-[5px] w-[82px] shrink-0"><svg class="w-[15px] h-[15px]"><use href="#smart"/></svg>智能布置<i class="ml-[1px] w-0 h-0 border-x-[3px] border-x-transparent border-t-[3px] border-t-black"></i></span>
        <span class="w-px h-[18px] bg-[#ccc] mr-[7px] shrink-0"></span>
        <span class="flex items-center gap-[5px] w-[85px] shrink-0"><svg class="w-[14px] h-[14px]"><use href="#auto"/></svg>自动生成板</span>
        <span class="flex items-center gap-[3px] w-[75px] shrink-0"><svg class="w-4 h-4"><use href="#beamcut"/></svg>按梁分割</span>
        <span class="flex items-center gap-[5px] w-[230px] shrink-0"><svg class="w-[15px] h-[15px]"><use href="#viewbar"/></svg>查看板内钢筋</span>
        <span class="shrink-0 w-[108px]">按标高批量定义斜板</span>
        <i class="ml-[6px] mr-[8px] shrink-0 w-0 h-0 border-x-[3px] border-x-transparent border-t-[3px] border-t-black"></i>
        <span class="flex items-center gap-[5px] shrink-0"><svg class="w-[15px] h-[15px]"><use href="#elev"/></svg>查改标高</span>
      </div>

      <!-- drawing canvas -->
      <svg class="block w-[1191px] h-[511px] bg-black shrink-0" viewBox="159 164 1191 511">
        <defs>
          <pattern id="hatchw" width="18" height="18" patternUnits="userSpaceOnUse" x="466" y="211"><path d="M-1 19L19 -1" stroke="#c4c4c4" stroke-width=".6"/></pattern>
          <pattern id="hatchb" width="18" height="18" patternUnits="userSpaceOnUse" x="466" y="211"><path d="M-1 19L19 -1" stroke="#2f78d8" stroke-width=".6"/></pattern>
        </defs>
        <rect x="466" y="211" width="220" height="441" fill="url(#hatchw)"/>
        <rect x="686" y="211" width="200" height="441" fill="url(#hatchb)"/>
        <!-- axis lines -->
        <g stroke="#107a10" fill="none">
          <path d="M235 211.500H1137M235 651.500H1137M287 262.500H1085M287 431.500H1085M287 601.500H1085"/>
          <path d="M466.500 164V675M517.500 190V650M593.500 164V675"/>
          <path d="M363.500 268V610M352 257l22 22M352 590l22 22"/>
          <path d="M456 201l20 20M456 221l20-20M507 221l20-20M583 221l20-20M456 252l20 20M456 421l20 20M456 591l20 20M456 641l20 20M456 661l20-20M507 661l20-20M583 661l20-20"/>
          <path d="M530 177l-4-9-9-4-9 4-4 9 4 9 9 4 9-4zM530 662l-4-9-9-4-9 4-4 9 4 9 9 4 9-4z"/>
          <path d="M287 262l-4-9-9-4-9 4-4 9 4 9 9 4 9-4zM287 601l-4-9-9-4-9 4-4 9 4 9 9 4 9-4zM1112 262l-4-9-9-4-9 4-4 9 4 9 9 4 9-4zM1112 601l-4-9-9-4-9 4-4 9 4 9 9 4 9-4z"/>
        </g>
        <!-- beams -->
        <g fill="#08e408">
          <rect x="512" y="257" width="340" height="13"/>
          <rect x="512" y="425" width="340" height="13"/>
          <rect x="512" y="593" width="340" height="13"/>
          <rect x="512" y="257" width="13" height="349"/>
          <rect x="587" y="257" width="13" height="349"/>
        </g>
        <g stroke="#7a3a10" fill="none" stroke-opacity=".8">
          <path d="M466 262.500H850M466 431.500H850M466 601.500H850M517.500 240V620M593.500 240V620"/>
        </g>
        <g fill="#0a78e6">
          <rect x="512" y="257" width="18" height="18"/>
          <rect x="512" y="588" width="18" height="18"/>
        </g>
        <g fill="#7400c8">
          <rect x="622" y="257" width="10" height="11"/>
          <rect x="740" y="257" width="10" height="11"/>
          <rect x="512" y="368" width="10" height="10"/>
          <rect x="512" y="485" width="10" height="10"/>
          <rect x="667" y="596" width="10" height="10"/>
          <rect x="784" y="596" width="10" height="10"/>
        </g>
        <!-- slab outline -->
        <path d="M466.500 211V652M686.500 211V652" stroke="#fff" stroke-width="1.500" fill="none"/>
        <path d="M466 211H686M466 652H686" stroke="#fff" stroke-width="2"/>
        <path d="M686 211H860M686 652H860" stroke="#fff" stroke-width="2" stroke-dasharray="5 4"/>
        <path d="M466 211.500H860M466 652.500H860" stroke="#8a1a1a" stroke-opacity=".6"/>
        <g fill="#fff">
          <rect x="682" y="207" width="9" height="9"/><rect x="792" y="207" width="8" height="8"/>
          <rect x="682" y="648" width="9" height="8"/><rect x="792" y="648" width="8" height="8"/>
        </g>
        <rect x="685" y="210" width="3" height="3" fill="#000"/><rect x="685" y="651" width="3" height="3" fill="#000"/>
        <rect x="682" y="427" width="9" height="9" fill="#c020c0"/><path d="M686.500 427v9M682 431.500h9" stroke="#000"/>
        <!-- labels -->
        <g class="font-['Liberation_Sans',sans-serif]" fill="#c8c8c8" font-size="18" text-anchor="middle">
          <text x="496" y="217">1000</text><text x="560" y="217">1500</text>
          <text x="496" y="658">1000</text><text x="560" y="658">1500</text>
          <text transform="translate(473,232) rotate(-90)">1000</text>
          <text transform="translate(473,513) rotate(-90)">3300</text>
          <text transform="translate(473,622) rotate(-90)">1000</text>
          <text transform="translate(345,427) rotate(-90)" font-size="20">6600</text>
          <text x="517" y="184" fill="#e0e0e0">1</text><text x="517" y="669" fill="#e0e0e0">1</text>
          <text x="274" y="269" fill="#e0e0e0">B</text><text x="1099" y="269" fill="#e0e0e0">B</text>
          <text x="274" y="608" fill="#e0e0e0">A</text><text x="1099" y="608" fill="#e0e0e0">A</text>
        </g>
        <!-- UCS -->
        <path d="M213.500 625V586" stroke="#00e000" stroke-width="4"/><path d="M213.500 576l-4 11h8z" fill="#00e000"/>
        <path d="M213 625h40" stroke="#f00000" stroke-width="4"/><path d="M264 625l-12-4v8z" fill="#f00000"/>
        <path d="M223 580l4.500 5 4.500-5M227.500 585v6" stroke="#0a9a0a" fill="none"/>
        <path d="M251 604l10 10M261 604l-10 10" stroke="#b01818"/>
      </svg>

      <!-- snap toolbar -->
      <div class="flex items-center h-[31px] shrink-0">
        <span class="w-[2px] h-[18px] ml-[4px] mr-[5px] border-l-2 border-dotted border-[#aaa] shrink-0"></span>
        <span class="flex items-center gap-[5px] w-[48px] shrink-0"><svg class="w-[15px] h-4"><use href="#ortho"/></svg>正交</span>
        <span class="flex items-center gap-[3px] w-[75px] h-[23px] pl-[3px] border border-[#5a9ee0] bg-[#e3effb] shrink-0"><svg class="w-4 h-4"><use href="#snap"/></svg>对象捕捉</span>
        <span class="flex items-center gap-[3px] w-[75px] h-[23px] pl-[3px] border border-l-0 border-[#5a9ee0] bg-[#e3effb] shrink-0"><svg class="w-4 h-4"><use href="#dyn"/></svg>动态输入</span>
        <span class="w-[2px] h-[18px] ml-[6px] mr-[5px] border-l-2 border-dotted border-[#aaa] shrink-0"></span>
        <span class="flex items-center gap-[5px] w-[48px] shrink-0"><svg class="w-[15px] h-[15px]"><use href="#cross"/></svg>交点</span>
        <span class="flex items-center gap-[3px] w-[51px] h-[23px] pl-[3px] border border-[#5a9ee0] bg-[#e3effb] shrink-0"><svg class="w-4 h-4"><use href="#perp"/></svg>垂点</span>
        <span class="flex items-center gap-[5px] w-[50px] h-[23px] pl-[3px] border border-l-0 border-[#5a9ee0] bg-[#e3effb] shrink-0"><svg class="w-[15px] h-[15px]"><use href="#mid"/></svg>中点</span>
        <span class="flex items-center gap-[5px] w-[51px] ml-[5px] shrink-0"><svg class="w-[14px] h-[15px]"><use href="#vertex"/></svg>顶点</span>
        <span class="flex items-center gap-[3px] w-[53px] shrink-0"><svg class="w-4 h-4"><use href="#coord"/></svg>坐标</span>
        <span class="w-[2px] h-[18px] mr-[4px] border-l-2 border-dotted border-[#aaa] shrink-0"></span>
        <span class="flex items-center justify-between w-[60px] h-[24px] pr-[7px] bg-white shrink-0">不偏移<i class="w-0 h-0 border-x-[3px] border-x-transparent border-t-[3px] border-t-black"></i></span>
        <span class="w-px h-[18px] bg-[#ccc] ml-[1px] mr-[2px] shrink-0"></span>
        <span class="text-[#8d8d8d] w-[19px] shrink-0 text-[13px]">X=</span>
        <span class="flex items-center justify-end w-[57px] h-[22px] border border-[#888] bg-[#f0f0f0] text-[#888] text-[13px] pr-[15px] relative shrink-0">0<span class="absolute right-[3px] top-[4px] flex flex-col gap-[6px]"><i class="w-0 h-0 border-x-[3px] border-x-transparent border-b-[3px] border-b-[#333]"></i><i class="w-0 h-0 border-x-[3px] border-x-transparent border-t-[3px] border-t-[#333]"></i></span></span>
        <span class="ml-[3px] text-[#777] text-[13px] shrink-0">mm</span>
        <span class="ml-[5px] text-[#8d8d8d] text-[13px] shrink-0">Y</span>
      </div>
    </div>
  </div>

  <!-- status bar -->
  <div class="flex items-center h-[21px] pt-[1px] border-t border-[#b4b4b4] bg-[#f8f8f8] whitespace-nowrap">
    <span class="w-[132px] h-full flex items-center border-r border-[#c4c4c4] font-['Liberation_Mono'] text-[10px] shrink-0">5918 Y=2208</span>
    <span class="w-[79px] h-full flex items-center pl-[3px] border-r border-[#c4c4c4] shrink-0">层高<span class="font-['Liberation_Mono'] text-[10px]">:2.7m</span></span>
    <span class="w-[101px] h-full flex items-center pl-[3px] border-r border-[#c4c4c4] shrink-0">底标高<span class="font-['Liberation_Mono'] text-[10px]">:0m</span></span>
    <span class="w-[49px] h-full flex items-center pl-[3px] border-r border-[#c4c4c4] font-['Liberation_Mono'] text-[10px] shrink-0">1(2)</span>
    <span class="pl-[4px] shrink-0">按鼠标左键指定第一个角点，或拾取构件图元</span>
  </div>

  <!-- sogou input bar, floats above the status bar -->
  <div class="absolute left-[1165px] top-[704px] w-[185px] h-[23px] flex items-center bg-[#f4f8fd]">
    <span class="w-[27px] h-[25px] -mt-[2px] ml-[1px] mr-[12px] rotate-[-10deg] bg-[#f0521e] text-white font-bold text-[21px] flex items-center justify-center">S</span>
    <span class="w-[24px] text-[#2a6fc0] text-[17px]">A</span>
    <svg class="w-[14px] h-[14px] mr-[8px]" viewBox="0 0 14 14"><path d="M10 1c2 6-2 10-9 9 4 5 12 3 12-3 0-3-1-5-3-6z" fill="#2a6fc0"/></svg>
    <svg class="w-[12px] h-[12px] mr-[9px]" viewBox="0 0 12 12"><circle cx="3" cy="3" r="1.600" fill="#2a6fc0"/><path d="M9 5c1 2 0 4-2 5" stroke="#2a6fc0" stroke-width="2" fill="none"/></svg>
    <svg class="w-[16px] h-[12px] mr-[8px]" viewBox="0 0 16 12"><rect width="16" height="12" rx="1" fill="#2a6fc0"/><path d="M2 3h12M2 6h12M4 9h8" stroke="#fff" stroke-dasharray="1.500 1"/></svg>
    <svg class="w-[14px] h-[14px] mr-[8px]" viewBox="0 0 14 14"><circle cx="6" cy="3" r="3" fill="#a9b8cb"/><path d="M1 13c0-7 10-7 10 0z" fill="#a9b8cb"/><rect x="9" y="9" width="5" height="5" fill="#fff" stroke="#9aa"/></svg>
    <svg class="w-[14px] h-[14px] mr-[8px]" viewBox="0 0 14 14"><path d="M4 0L0 3l2 3 1-1v9h8V5l1 1 2-3-4-3-3 2z" fill="#2a6fc0"/></svg>
    <svg class="w-[14px] h-[14px]" viewBox="0 0 14 14"><path d="M1 13l6-7c-1-4 2-6 6-5l-3 3 1 2 2-1c0 4-3 6-5 5l-5 5z" fill="#2a6fc0"/></svg>
  </div>

  <!-- context menu -->
  <div class="absolute left-[820px] top-0 w-[226px] h-[728px] pt-[2px] border-x border-b border-[#8a8a8a] bg-[linear-gradient(90deg,#efefef_0,#f4f4f4_24px,#fff_25px)] whitespace-nowrap">
    <div class="flex items-center h-[23px] pl-[31px] pr-[18px] justify-between"><span>重复查看板内钢筋(H)</span><span class="tracking-[.4px]">Space</span></div>
    <div class="flex items-center h-[23px] pl-[31px]">取消选择(A)</div>
    <div class="h-[3px] ml-[31px] flex items-center"><span class="h-px w-full bg-[#c4c4c4]"></span></div>
    <div class="flex items-center h-[23px] pl-[3px] pr-[18px] justify-between"><span class="flex items-center gap-[12px]"><svg class="w-4 h-4"><use href="#undo"/></svg>撤消(U)</span><span class="tracking-[.5px]">Ctrl+Z</span></div>
    <div class="flex items-center h-[23px] pl-[3px] pr-[18px] justify-between text-[#8d8d8d]"><span class="flex items-center gap-[12px]"><svg class="w-4 h-4"><use href="#redo"/></svg>恢复(R)</span><span class="tracking-[.6px]">Shift+Ctrl+Z</span></div>
    <div class="h-[3px] ml-[31px] flex items-center"><span class="h-px w-full bg-[#c4c4c4]"></span></div>
    <div class="flex items-center h-[23px] pl-[3px] pr-[18px] justify-between"><span class="flex items-center gap-[12px]"><svg class="w-4 h-4"><use href="#brush"/></svg>删除(D)</span><span class="tracking-[.5px]">Del</span></div>
    <div class="flex items-center h-[23px] pl-[3px] gap-[12px]"><svg class="w-4 h-4"><use href="#copy"/></svg>复制(C)</div>
    <div class="flex items-center h-[23px] pl-[3px] gap-[12px]"><svg class="w-4 h-4"><use href="#mirror"/></svg>镜像(M)</div>
    <div class="flex items-center h-[23px] pl-[3px] gap-[12px]"><svg class="w-4 h-4"><use href="#move"/></svg>移动(V)</div>
    <div class="flex items-center h-[23px] pl-[3px] gap-[12px]"><svg class="w-4 h-4"><use href="#rotate"/></svg>旋转(R)</div>
    <div class="flex items-center h-[23px] pl-[3px] gap-[12px]"><svg class="w-4 h-4"><use href="#split"/></svg>分割(X)</div>
    <div class="flex items-center h-[23px] pl-[3px] gap-[12px]"><svg class="w-4 h-4"><use href="#merge"/></svg>合并(G)</div>
    <div class="flex items-center h-[23px] pl-[3px] gap-[12px]"><svg class="w-4 h-4"><use href="#offset"/></svg>偏移(O)</div>
    <div class="flex items-center h-[23px] pl-[3px] gap-[12px]"><svg class="w-4 h-4"><use href="#stretch"/></svg>拉伸(S)</div>
    <div class="h-[3px] ml-[31px] flex items-center"><span class="h-px w-full bg-[#c4c4c4]"></span></div>
    <div class="flex items-center h-[21px] pl-[3px] gap-[4px] bg-white"><svg class="w-4 h-4"><use href="#pencil"/></svg>设置夹点(N)</div>
    <div class="h-[3px] ml-[31px] flex items-center"><span class="h-px w-full bg-[#c4c4c4]"></span></div>
    <div class="flex items-center h-[23px] pl-[3px] gap-[12px]"><svg class="w-4 h-4"><use href="#props"/></svg>构件属性编辑器(P)</div>
    <div class="flex items-center h-[23px] pl-[3px] gap-[12px]"><svg class="w-4 h-4"><use href="#rename"/></svg>修改构件图元名称(Y)</div>
    <div class="flex items-center h-[23px] pl-[3px] gap-[12px]"><svg class="w-4 h-4"><use href="#level"/></svg>平齐板顶</div>
    <div class="h-[3px] ml-[31px] flex items-center"><span class="h-px w-full bg-[#c4c4c4]"></span></div>
    <div class="flex items-center h-[23px] pl-[3px] gap-[12px]"><svg class="w-4 h-4"><use href="#same"/></svg>选择同名称图元</div>
    <div class="flex items-center h-[23px] pl-[3px] gap-[12px] text-[#8d8d8d]"><svg class="w-4 h-4"><use href="#adjust"/></svg>调整线性图元方向</div>
    <div class="h-[3px] ml-[31px] flex items-center"><span class="h-px w-full bg-[#c4c4c4]"></span></div>
    <div class="flex items-center h-[23px] pl-[3px] gap-[12px]"><svg class="w-4 h-4"><use href="#auto"/></svg>自动生成板(Q)</div>
    <div class="flex items-center h-[23px] pl-[3px] gap-[12px]"><svg class="w-4 h-4"><use href="#beamcut"/></svg>按梁分割</div>
    <div class="flex items-center h-[23px] pl-[3px] gap-[12px]"><svg class="w-4 h-4"><use href="#viewbar"/></svg>查看板内钢筋</div>
    <div class="h-[3px] ml-[31px] flex items-center"><span class="h-px w-full bg-[#c4c4c4]"></span></div>
    <div class="flex items-center h-[23px] pl-[3px] gap-[12px]"><svg class="w-4 h-4"><use href="#tri"/></svg>三点定义斜板</div>
    <div class="flex items-center h-[23px] pl-[3px] gap-[12px]"><svg class="w-4 h-4"><use href="#hammer"/></svg>按基准边、抬起点定义斜板</div>
    <div class="flex items-center h-[23px] pl-[3px] gap-[12px]"><svg class="w-4 h-4"><use href="#hammer"/></svg>按基准边、坡度系数定义斜板</div>
    <div class="h-[3px] ml-[31px] flex items-center"><span class="h-px w-full bg-[#c4c4c4]"></span></div>
    <div class="flex items-center h-[23px] pl-[1px] gap-[12px] mx-[1px] w-[222px] border border-[#4a90d0] bg-[#c1dcf5]"><svg class="w-4 h-4"><use href="#slabe"/></svg>按标高批量定义斜板</div>
    <div class="flex items-center h-[23px] pl-[3px] gap-[12px]"><svg class="w-4 h-4"><use href="#slabs"/></svg>按坡度批量定义斜板</div>
    <div class="h-[3px] ml-[31px] flex items-center"><span class="h-px w-full bg-[#c4c4c4]"></span></div>
    <div class="flex items-center h-[23px] pl-[3px] gap-[12px]"><svg class="w-4 h-4"><use href="#floors"/></svg>复制图元到其它分层</div>
    <div class="h-[3px] ml-[31px] flex items-center"><span class="h-px w-full bg-[#c4c4c4]"></span></div>
    <div class="flex items-center h-[23px] pl-[3px] gap-[12px]"><svg class="w-4 h-4"><use href="#calc"/></svg>计算选中图元</div>
    <div class="h-[3px] ml-[31px] flex items-center"><span class="h-px w-full bg-[#c4c4c4]"></span></div>
    <div class="flex items-center justify-center h-[28px]"><i class="w-0 h-0 border-x-[4px] border-x-transparent border-t-[4px] border-t-black"></i></div>
  </div>
</div>
</body>
</html>
